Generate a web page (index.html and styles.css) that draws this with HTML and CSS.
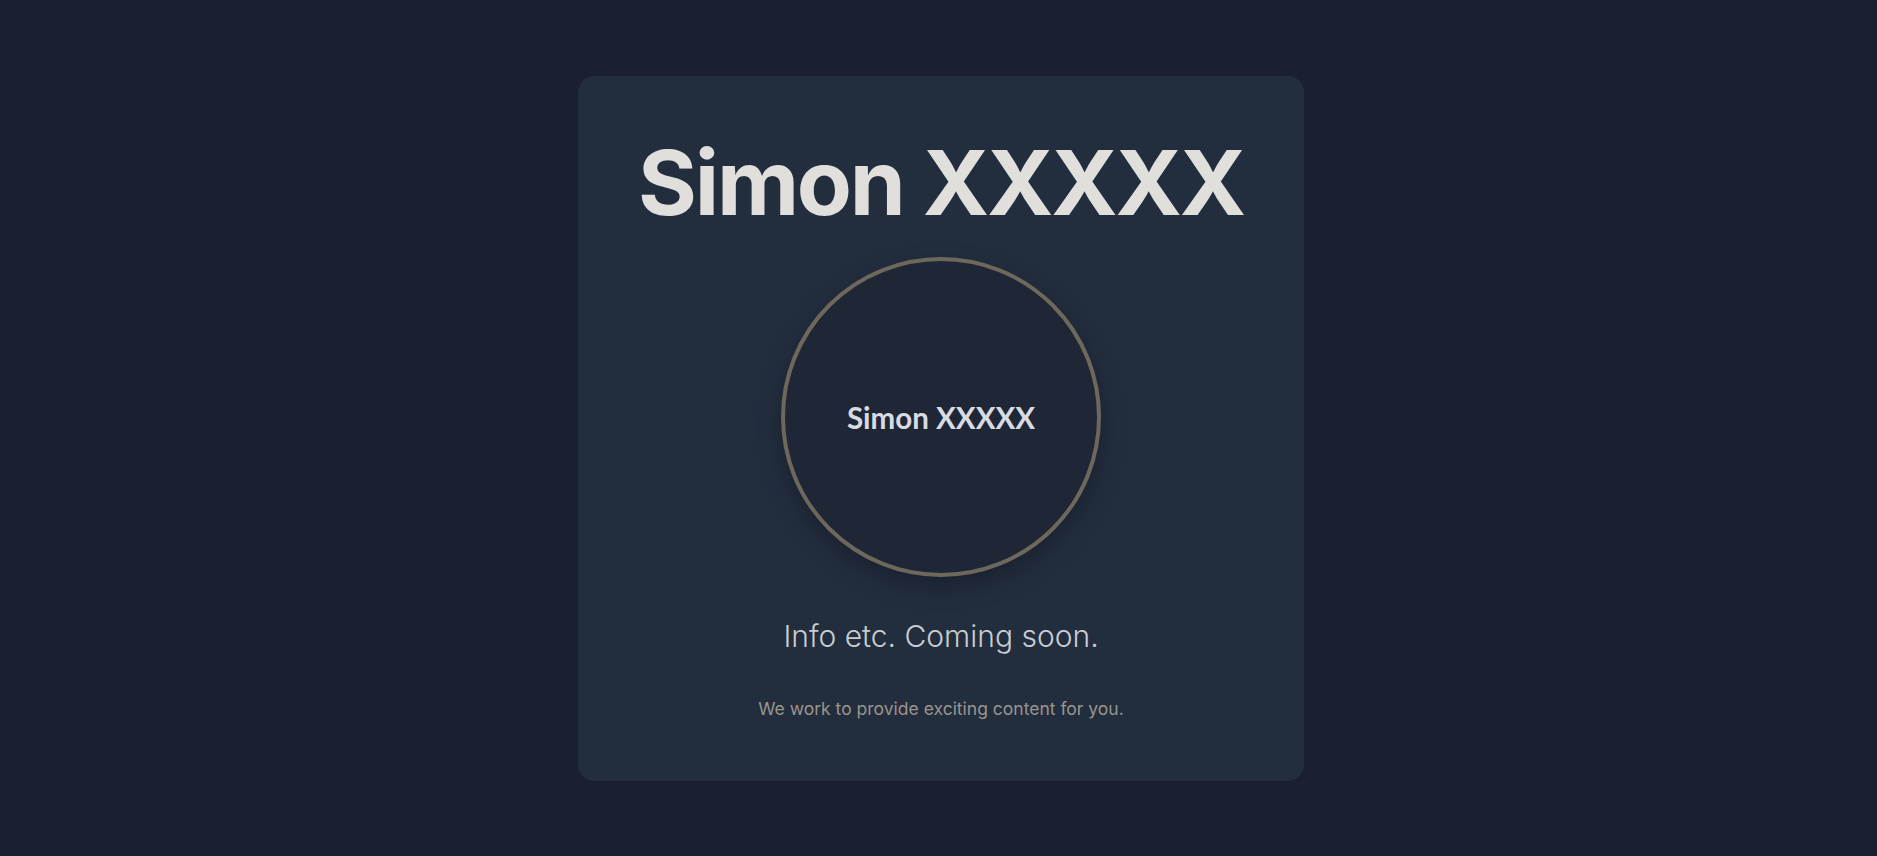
FILE: index.html
```html
<!DOCTYPE html>
<html lang="en">
<head>
<meta charset="utf-8">
<title>Simon XXXXX</title>
<link rel="stylesheet" href="styles.css">
</head>
<body>
<main class="page">
  <section class="card">
    <h1 class="title">Simon XXXXX</h1>
    <div class="avatar"><span class="avatar-name">Simon XXXXX</span></div>
    <p class="lead">Info etc. Coming soon.</p>
    <p class="note">We work to provide exciting content for you.</p>
  </section>
</main>
</body>
</html>
```
FILE: styles.css
```css
html, body {
  margin: 0;
  padding: 0;
  height: 100%;
}
body {
  background: #1a2030;
  font-family: Inter, "Noto Sans", sans-serif;
}
.page {
  display: flex;
  justify-content: center;
  padding-top: 76px;
  padding-left: 5px;
}
.card {
  width: 726px;
  height: 705px;
  box-sizing: border-box;
  background: #222d3e;
  border-radius: 16px;
  display: flex;
  flex-direction: column;
  align-items: center;
  padding-top: 53px;
}
.title {
  margin: 0;
  font-size: 90px;
  font-weight: 700;
  line-height: 1.2;
  letter-spacing: -2.2px;
  color: #e0dfdb;
}
.avatar {
  margin-top: 20px;
  width: 320px;
  height: 320px;
  box-sizing: border-box;
  border: 4px solid #6e675c;
  border-radius: 50%;
  background: #1f2736;
  box-shadow: 0 10px 25px rgba(0, 0, 0, 0.25);
  display: flex;
  align-items: center;
  justify-content: center;
}
.avatar-name {
  font-family: Lato, "Noto Sans", sans-serif;
  font-weight: 700;
  font-size: 29.5px;
  color: #d9dbe2;
}
.lead {
  margin: 41px 0 0;
  font-size: 30px;
  font-weight: 300;
  color: #c9ccd0;
}
.note {
  margin: 44px 0 0;
  font-size: 17.5px;
  color: #9a958c;
}
```
